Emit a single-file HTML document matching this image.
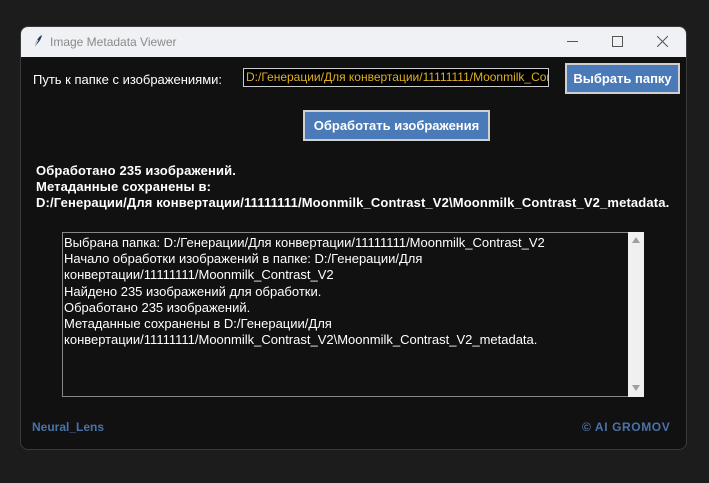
<!DOCTYPE html>
<html><head><meta charset="utf-8"><style>
body{margin:0;width:709px;height:483px;background:#1c1c1c;position:relative;overflow:hidden;font-family:"Liberation Sans",Arial,sans-serif;}
.win{position:absolute;left:20px;top:26px;width:665px;height:422px;background:#111111;border:1px solid #3a3a3a;border-radius:8px;overflow:hidden;}
.tb{position:absolute;left:0;top:0;width:100%;height:30px;background:#f0f1f5;}
.tb .t{position:absolute;left:29px;top:8px;font-size:12px;color:#8a8a8a;}
.a{position:absolute;white-space:nowrap;}
.btn{position:absolute;background:#4a7ab8;border:2px solid #d0d0d0;color:#fff;font-weight:bold;font-size:13px;text-align:center;box-sizing:border-box;}
</style></head><body>
<div class="win">
 <div class="tb">
  <svg style="position:absolute;left:10px;top:7px" width="12" height="16" viewBox="0 0 12 16"><path d="M2 15 L5 8 Q8 2 11 1 Q10 6 6 10 Z" fill="#2a3a5a"/><path d="M2 15 L7 6" stroke="#fff" stroke-width="0.8"/></svg>
  <div class="t">Image Metadata Viewer</div>
  <div class="a" style="left:546px;top:14px;width:11px;height:1px;background:#555"></div>
  <div class="a" style="left:591px;top:9px;width:9px;height:9px;border:1px solid #555"></div>
  <svg class="a" style="left:636px;top:9px" width="11" height="11"><path d="M0 0L11 11M11 0L0 11" stroke="#555" stroke-width="1"/></svg>
 </div>
 <div class="a" style="left:12px;top:45px;font-size:13px;color:#fff">Путь к папке с изображениями:</div>
 <div class="a" style="left:222px;top:41px;width:306px;height:19px;background:#000;border:1px solid #ccc;box-sizing:border-box;color:#e0b020;font-size:12px;line-height:17px;padding-left:2px;overflow:hidden">D:/Генерации/Для конвертации/11111111/Moonmilk_Contrast_V2</div>
 <div class="btn" style="left:544px;top:36px;width:115px;height:31px;line-height:27px;font-size:13px">Выбрать папку</div>
 <div class="btn" style="left:282px;top:83px;width:187px;height:31px;line-height:27px">Обработать изображения</div>
 <div class="a" style="left:15px;top:136px;font-size:13px;font-weight:bold;color:#fff;line-height:16px;letter-spacing:0.14px">Обработано 235 изображений.<br>Метаданные сохранены в:<br>D:/Генерации/Для конвертации/11111111/Moonmilk_Contrast_V2\Moonmilk_Contrast_V2_metadata.</div>
 <div class="a" style="left:41px;top:205px;width:567px;height:165px;border:1px solid #888;box-sizing:border-box;background:#111;color:#fff;font-size:13px;line-height:16.2px;padding:2px 0 0 1px;letter-spacing:0px">Выбрана папка: D:/Генерации/Для конвертации/11111111/Moonmilk_Contrast_V2<br>Начало обработки изображений в папке: D:/Генерации/Для<br>конвертации/11111111/Moonmilk_Contrast_V2<br>Найдено 235 изображений для обработки.<br>Обработано 235 изображений.<br>Метаданные сохранены в D:/Генерации/Для<br>конвертации/11111111/Moonmilk_Contrast_V2\Moonmilk_Contrast_V2_metadata.</div>
 <div class="a" style="left:607px;top:205px;width:16px;height:165px;background:#f0f0f0">
  <svg style="position:absolute;left:4px;top:5px" width="8" height="6"><path d="M0 6L4 0L8 6Z" fill="#a0a0a0"/></svg>
  <svg style="position:absolute;left:4px;top:153px" width="8" height="6"><path d="M0 0L4 6L8 0Z" fill="#a0a0a0"/></svg>
 </div>
 <div class="a" style="left:11px;top:393px;font-size:12px;font-weight:bold;color:#4a72a8">Neural_Lens</div>
 <div class="a" style="left:561px;top:393px;font-size:12px;font-weight:bold;color:#4a72a8;letter-spacing:0.6px">© AI GROMOV</div>
</div>
</body></html>
